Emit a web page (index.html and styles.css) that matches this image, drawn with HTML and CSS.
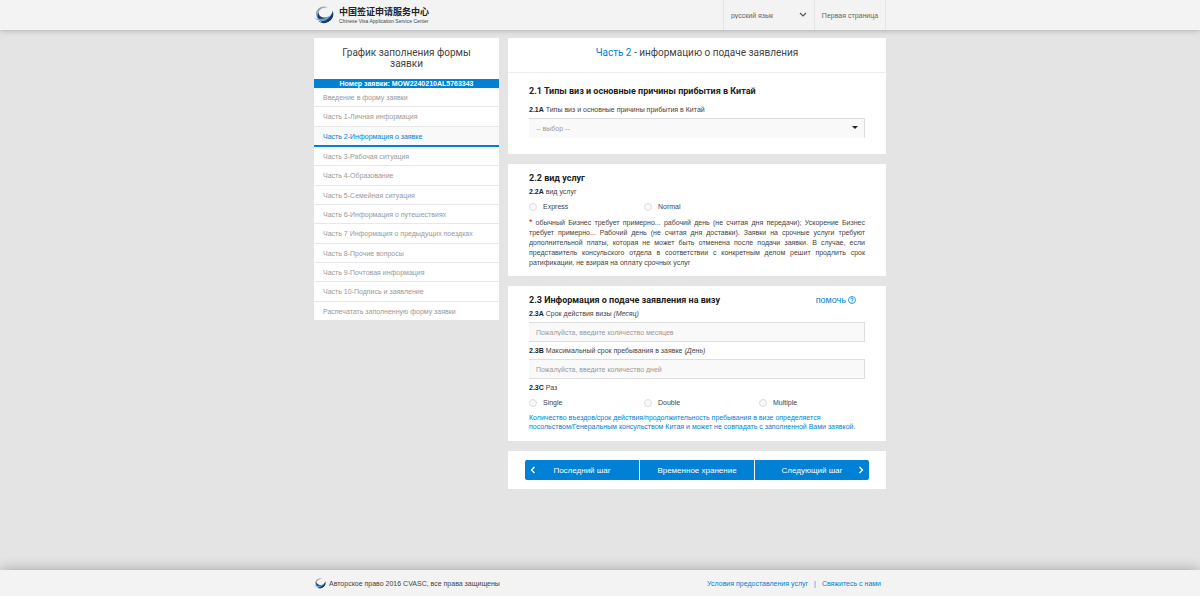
FILE: index.html
```html
<!DOCTYPE html>
<html lang="ru">

<head>
    <meta charset="UTF-8">
    <meta name="viewport" content="width=device-width, initial-scale=1.0">
    <title>Часть 2 - Информация о заявке</title>
    <link rel="stylesheet" href="styles.css">
</head>

<body>
    <!-- Логотип, используется в шапке и подвале -->
    <svg class="sprite" width="0" height="0" aria-hidden="true">
        <symbol id="logo" viewBox="0 0 60 54">
            <path d="M42 4 C24 -3 5 8 6 26 C7 32 10 36 14 38 C10 28 12 20 16 14 C22 7 30 4 42 4Z" fill="#9aa3ae"/>
            <path d="M14 18 C13 30 24 37 38 34 C49 31 55 24 56 14 C62 30 54 42 42 47 C34 50 25 49 19 45 C10 40 8 28 14 18Z" fill="#1b3a70"/>
            <path d="M0 33 C12 43 34 42 50 27 C40 47 12 51 0 33Z" fill="#3aa0dc" stroke="#f3f3f3" stroke-width="1"/>
            <path d="M12 46 C28 50 46 43 57 27 C54 47 32 59 12 46Z" fill="#1b3a70"/>
        </symbol>
    </svg>

    <!-- Шапка -->
    <header class="header">
        <div class="container header-inner">
            <a href="#" class="logo">
                <svg class="logo-icon" aria-hidden="true"><use href="#logo"/></svg>
                <span class="logo-text">
                    <span class="logo-cn" lang="zh">中国签证申请服务中心</span>
                    <span class="logo-en">Chinese Visa Application Service Center</span>
                </span>
            </a>
            <nav class="top-nav">
                <div class="lang">
                    <select aria-label="язык">
                        <option>русский язык</option>
                    </select>
                    <svg class="lang-arrow" viewBox="0 0 8 6" aria-hidden="true"><path d="M1 1l3 3 3-3" fill="none" stroke="#555" stroke-width="1.2"/></svg>
                </div>
                <a href="#" class="home-link">Первая страница</a>
            </nav>
        </div>
    </header>

    <div class="container content">
        <!-- Меню разделов -->
        <aside class="sidebar">
            <h2>График заполнения формы заявки</h2>
            <p class="number">Номер заявки: MOW2240210AL5763343</p>
            <ul>
                <li><a href="#">Введение в форму заявки</a></li>
                <li><a href="#">Часть 1-Личная информация</a></li>
                <li class="active"><a href="#">Часть 2-Информация о заявке</a></li>
                <li><a href="#">Часть 3-Рабочая ситуация</a></li>
                <li><a href="#">Часть 4-Образование</a></li>
                <li><a href="#">Часть 5-Семейная ситуация</a></li>
                <li><a href="#">Часть 6-Информация о путешествиях</a></li>
                <li><a href="#">Часть 7 Информация о предыдущих поездках</a></li>
                <li><a href="#">Часть 8-Прочие вопросы</a></li>
                <li><a href="#">Часть 9-Почтовая информация</a></li>
                <li><a href="#">Часть 10-Подпись и заявление</a></li>
                <li><a href="#">Распечатать заполненную форму заявки</a></li>
            </ul>
        </aside>

        <form class="main">
            <section class="card card-first">
                <h1><span>Часть 2</span> - информацию о подаче заявления</h1>
                <div class="card-body">
                    <h3>2.1 Типы виз и основные причины прибытия в Китай</h3>
                    <label class="label" for="visaType"><b>2.1A</b> Типы виз и основные причины прибытия в Китай</label>
                    <div class="select-box">
                        <select id="visaType">
                            <option>-- выбор --</option>
                        </select>
                    </div>
                </div>
            </section>

            <section class="card">
                <h3>2.2 вид услуг</h3>
                <p class="label" id="serviceLabel"><b>2.2A</b> вид услуг</p>
                <div class="radios" role="radiogroup" aria-labelledby="serviceLabel">
                    <label><input type="radio" name="service"> Express</label>
                    <label><input type="radio" name="service"> Normal</label>
                </div>
                <p class="note"><span class="star">*</span>обычный Бизнес требует примерно... рабочий день (не считая дня передачи); Ускорение Бизнес требует примерно... Рабочий день (не считая дня доставки). Заявки на срочные услуги требуют дополнительной платы, которая не может быть отменена после подачи заявки. В случае, если представитель консульского отдела в соответствии с конкретным делом решит продлить срок ратификации, не взирая на оплату срочных услуг</p>
            </section>

            <section class="card">
                <div class="card-title">
                    <h3>2.3 Информация о подаче заявления на визу</h3>
                    <a href="#" class="help">помочь
                        <svg viewBox="0 0 16 16" aria-hidden="true"><circle cx="8" cy="8" r="7" fill="none" stroke="#0081d5" stroke-width="1.6"/><path d="M5.5 6.3C5.6 3.4 10.6 3.4 10.5 6.3C10.4 8 8 8 8 10M8 11.2V13" fill="none" stroke="#0081d5" stroke-width="1.8"/></svg>
                    </a>
                </div>
                <label class="label" for="validity"><b>2.3A</b> Срок действия визы <i>(Месяц)</i></label>
                <input class="field" id="validity" type="text" placeholder="Пожалуйста, введите количество месяцев">
                <label class="label label-next" for="stay"><b>2.3B</b> Максимальный срок пребывания в заявке <i>(День)</i></label>
                <input class="field" id="stay" type="text" placeholder="Пожалуйста, введите количество дней">
                <p class="label label-next" id="entriesLabel"><b>2.3C</b> Раз</p>
                <div class="radios" role="radiogroup" aria-labelledby="entriesLabel">
                    <label><input type="radio" name="entries"> Single</label>
                    <label><input type="radio" name="entries"> Double</label>
                    <label><input type="radio" name="entries"> Multiple</label>
                </div>
                <p class="hint">Количество въездов/срок действия/продолжительность пребывания в визе определяется посольством/Генеральным консульством Китая и может не совпадать с заполненной Вами заявкой.</p>
            </section>

            <!-- Кнопки -->
            <div class="card buttons">
                <button type="button">
                    <svg viewBox="0 0 6 8" aria-hidden="true"><path d="M4.5 1L1.5 4l3 3" fill="none" stroke="#fff" stroke-width="1.3"/></svg>
                    <span>Последний шаг</span>
                </button>
                <button type="button"><span>Временное хранение</span></button>
                <button type="button">
                    <span>Следующий шаг</span>
                    <svg viewBox="0 0 6 8" aria-hidden="true"><path d="M1.5 1l3 3-3 3" fill="none" stroke="#fff" stroke-width="1.3"/></svg>
                </button>
            </div>
        </form>
    </div>

    <!-- Подвал -->
    <footer class="footer">
        <div class="container footer-inner">
            <p><svg class="footer-icon" aria-hidden="true"><use href="#logo"/></svg>Авторское право 2016 CVASC, все права защищены</p>
            <div class="footer-links">
                <a href="#">Условия предоставления услуг</a>
                <span>|</span>
                <a href="#">Свяжитесь с нами</a>
            </div>
        </div>
    </footer>
</body>

</html>
```
FILE: styles.css
```css
* {
    box-sizing: border-box;
    margin: 0;
    padding: 0;
}

body {
    font-family: "Liberation Sans", Arial, sans-serif;
    font-size: 7px;
    color: #444;
    background-color: #e4e4e4;
    min-height: 100vh;
    display: flex;
    flex-direction: column;
}

a {
    text-decoration: none;
    color: #0081d5;
}

select,
input,
button {
    font-family: inherit;
    font-size: 7px;
}

.sprite {
    position: absolute;
}

.container {
    width: 100%;
    max-width: 572px;
    margin: 0 auto;
}

/* Шапка */
.header {
    background-color: #f3f3f3;
    box-shadow: 0 0 6px rgba(0, 0, 0, 0.3);
}

.header-inner {
    display: flex;
    justify-content: space-between;
    height: 30px;
}

.logo {
    display: flex;
    align-items: center;
    gap: 5px;
}

.logo-icon {
    width: 20px;
    height: 18px;
}

.logo-text {
    display: flex;
    flex-direction: column;
}

.logo-cn {
    font-family: "Noto Sans CJK SC", sans-serif;
    font-size: 9px;
    font-weight: bold;
    line-height: 12px;
    color: #222;
}

.logo-en {
    font-size: 5px;
    line-height: 6px;
    color: #444;
}

.top-nav {
    display: flex;
}

.lang {
    display: flex;
    align-items: center;
    width: 91px;
    padding: 0 7px;
    border-left: 1px solid #e4e4e4;
}

.lang select {
    flex: 1;
    height: 12px;
    appearance: none;
    border: none;
    background: transparent;
    color: #666;
}

.lang-arrow {
    width: 8px;
    height: 6px;
}

.home-link {
    width: 72px;
    line-height: 31px;
    text-align: center;
    color: #666;
    border-left: 1px solid #e4e4e4;
    border-right: 1px solid #e4e4e4;
}

/* Содержимое */
.content {
    flex: 1;
    display: flex;
    align-items: flex-start;
    gap: 9px;
    padding: 8px 0;
}

/* Меню разделов */
.sidebar {
    flex: 0 0 185px;
    background-color: #fff;
}

.sidebar h2 {
    font-family: Roboto, sans-serif;
    font-size: 10px;
    font-weight: normal;
    line-height: 11px;
    text-align: center;
    color: #444;
    padding: 9px 20px 10px;
}

.sidebar .number {
    background-color: #0081d5;
    color: #fff;
    font-weight: bold;
    line-height: 9px;
    text-align: center;
}

.sidebar ul {
    list-style: none;
    display: flex;
    flex-direction: column;
    min-height: 232px;
}

.sidebar li {
    flex: 1 0 auto;
    border-bottom: 1px solid #e8e8e8;
}

.sidebar li a {
    display: block;
    line-height: 20px;
    height: 18px;
    padding: 0 9px;
    color: #999;
}

.sidebar li:last-child {
    border-bottom: none;
}

.sidebar .active {
    background-color: #f9f9f9;
    border-bottom: 2px solid #0081d5;
}

.sidebar .active a {
    color: #0081d5;
}

/* Карточки формы */
.main {
    flex: 1;
    min-width: 0;
    display: flex;
    flex-direction: column;
    gap: 10px;
}

.card {
    background-color: #fff;
    padding: 8px 21px;
}

.card-first {
    padding: 0;
}

.card-body {
    padding: 12px 21px 16px;
}

h1 {
    font-family: Roboto, sans-serif;
    font-size: 10px;
    font-weight: normal;
    line-height: 28px;
    text-align: center;
    color: #444;
    padding: 1px 0 5px;
    border-bottom: 1px solid #eee;
}

h1 span {
    color: #0081d5;
}

h3 {
    font-family: Roboto, sans-serif;
    font-size: 9px;
    line-height: 12px;
    color: #222;
}

.label {
    display: block;
    line-height: 12px;
    margin: 2px 0;
}

.card-body .label {
    margin-top: 7px;
}

.card .label-next {
    margin-top: 3px;
}

.label b {
    color: #222;
}

.select-box {
    position: relative;
}

.select-box::after {
    content: "";
    position: absolute;
    top: 8px;
    right: 7px;
    border: 3px solid transparent;
    border-top-color: #222;
    border-bottom: none;
}

.select-box select {
    appearance: none;
    display: block;
    width: 100%;
    height: 20px;
    padding: 0 7px;
    border: solid #ddd;
    border-width: 1px 1px 0 0;
    background-color: #f9f9f9;
    color: #999;
}

.field {
    display: block;
    width: 100%;
    height: 20px;
    padding: 0 7px;
    border: solid #ddd;
    border-width: 1px 1px 1px 0;
    background-color: #f9f9f9;
}

.field::placeholder {
    color: #999;
}

.radios {
    display: grid;
    grid-template-columns: repeat(3, 115px);
    margin-top: 3px;
}

.radios label {
    display: flex;
    align-items: center;
    gap: 6px;
    line-height: 12px;
}

.radios input {
    appearance: none;
    width: 8px;
    height: 8px;
    border: 1px solid #ddd;
    border-radius: 50%;
    background-color: #f9f9f9;
}

.note {
    margin-top: 5px;
    line-height: 10px;
    text-align: justify;
}

.star {
    float: left;
    margin-right: 3px;
    font-size: 9px;
    line-height: 9px;
    color: #f00;
}

.card-title {
    display: flex;
    justify-content: space-between;
    align-items: center;
}

.help {
    display: flex;
    align-items: center;
    gap: 2px;
    margin-right: 9px;
    font-size: 9px;
    line-height: 12px;
}

.help svg {
    width: 8px;
    height: 8px;
}

.hint {
    margin: 4px 0 2px;
    line-height: 9px;
    color: #0081d5;
}

/* Кнопки */
.buttons {
    display: flex;
    gap: 1px;
    padding: 9px 17px;
}

.buttons button {
    flex: 1;
    display: grid;
    grid-template-columns: 6px 1fr 6px;
    align-items: center;
    height: 20px;
    padding: 0 5px;
    border: none;
    background-color: #0081d5;
    color: #fff;
    font-size: 8px;
    cursor: pointer;
}

.buttons button:first-child {
    border-radius: 2px 0 0 2px;
}

.buttons button:last-child {
    border-radius: 0 2px 2px 0;
}

.buttons span {
    grid-column: 2;
}

.buttons svg {
    width: 6px;
    height: 8px;
}

/* Подвал */
.footer {
    background-color: #f3f3f3;
    box-shadow: 0 0 14px rgba(0, 0, 0, 0.3);
}

.footer-inner {
    display: flex;
    justify-content: space-between;
    align-items: center;
    height: 26px;
}

.footer p {
    display: flex;
    align-items: center;
    gap: 3px;
}

.footer-icon {
    width: 12px;
    height: 11px;
}

.footer-links {
    display: flex;
    gap: 6px;
    padding-right: 5px;
    color: #0081d5;
}
```
